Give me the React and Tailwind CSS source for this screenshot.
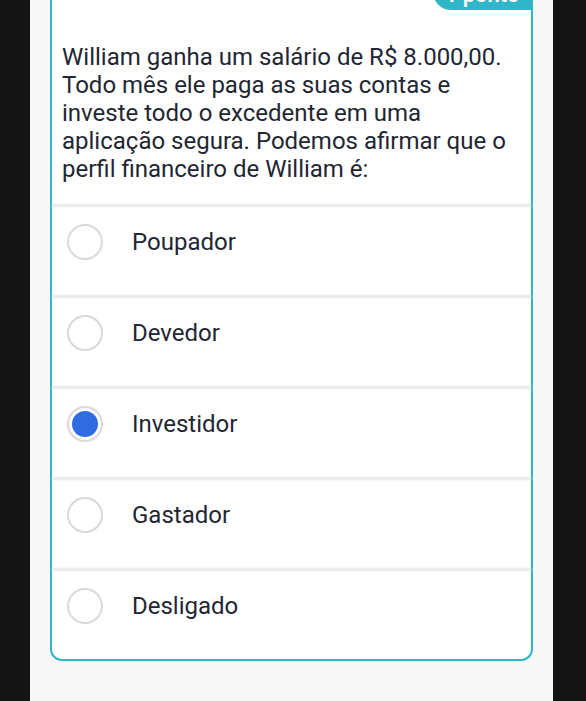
const OPCOES = ["Poupador", "Devedor", "Investidor", "Gastador", "Desligado"];

export default function App() {
  const selecionada = "Investidor";

  return (
    <div
      className="flex h-[701px] w-[586px] overflow-hidden bg-[#141414]"
      style={{ fontFamily: "Roboto, 'Noto Sans', sans-serif" }}
    >
      <div className="w-[30px] shrink-0" />
      <main className="w-[523px] shrink-0 bg-[#f7f7f7] px-[20px]">
        <div className="mt-[-20px] rounded-b-[12px] border-2 border-t-0 border-[#2fb6c8] bg-white">
          {/* Cabeçalho cortado no topo */}
          <div className="flex h-[63px] items-start justify-between pl-[12px]">
            <span className="pt-[3px] text-[15px] leading-[20px] text-[#8a8f98]">Questão 10 de 10</span>
            <span className="flex h-[30px] w-[98px] items-end justify-center rounded-bl-[18px] bg-[#2fb6c8] pb-[2px] text-[22px] font-semibold leading-[26px] text-white">
              1 ponto
            </span>
          </div>

          {/* Enunciado */}
          <p className="pl-[10px] pr-[12px] pb-[21px] text-[24px] leading-[28px] text-[#1f2633]">
            William ganha um salário de R$ 8.000,00. Todo mês ele paga as suas contas e
            investe todo o excedente em uma aplicação segura. Podemos afirmar que o perfil
            financeiro de William é:
          </p>

          {/* Alternativas */}
          {OPCOES.map((op) => {
            const ativa = op === selecionada;
            return (
              <div key={op}>
                <div className="h-[3px] bg-[#ececec] shadow-[0_0_2px_#e6e6e6]" />
                <label className="flex h-[88px] items-start pl-[15px] pt-[17px]">
                  <span className="flex h-[36px] w-[36px] items-center justify-center rounded-full border-2 border-[#d9d9d9]">
                    {ativa && <span className="h-[26px] w-[26px] rounded-full bg-[#2f6be3]" />}
                  </span>
                  <span className="ml-[29px] text-[24px] leading-[36px] text-[#1f2633]">{op}</span>
                </label>
              </div>
            );
          })}
        </div>
      </main>
      <div className="flex-1" />
    </div>
  );
}
